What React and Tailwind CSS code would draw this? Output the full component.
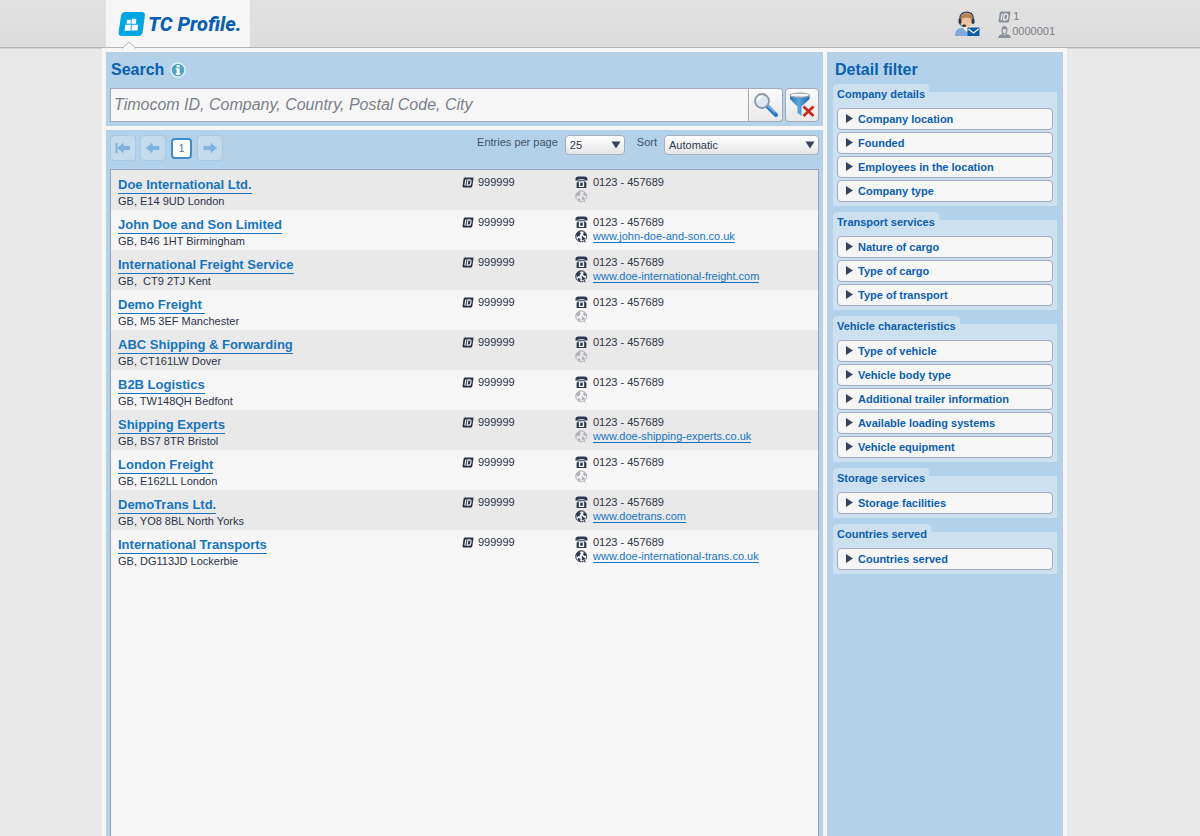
import React from "react";

const SANS = "font-['Liberation_Sans',Arial,sans-serif]";

const companies = [
  { name: "Doe International Ltd.", address: "GB, E14 9UD London" },
  { name: "John Doe and Son Limited", address: "GB, B46 1HT Birmingham", web: "www.john-doe-and-son.co.uk", active: true },
  { name: "International Freight Service", address: "GB,\u00a0 CT9 2TJ Kent", web: "www.doe-international-freight.com", active: true },
  { name: "Demo Freight\u00a0", address: "GB, M5 3EF Manchester" },
  { name: "ABC Shipping & Forwarding", address: "GB, CT161LW Dover" },
  { name: "B2B Logistics", address: "GB, TW148QH Bedfont" },
  { name: "Shipping Experts", address: "GB, BS7 8TR Bristol", web: "www.doe-shipping-experts.co.uk" },
  { name: "London Freight", address: "GB, E162LL London" },
  { name: "DemoTrans Ltd.", address: "GB, YO8 8BL North Yorks", web: "www.doetrans.com", active: true },
  { name: "International Transports", address: "GB, DG113JD Lockerbie", web: "www.doe-international-trans.co.uk", active: true },
];

const filterGroups = [
  { title: "Company details", items: ["Company location", "Founded", "Employees in the location", "Company type"] },
  { title: "Transport services", items: ["Nature of cargo", "Type of cargo", "Type of transport"] },
  { title: "Vehicle characteristics", items: ["Type of vehicle", "Vehicle body type", "Additional trailer information", "Available loading systems", "Vehicle equipment"] },
  { title: "Storage services", items: ["Storage facilities"] },
  { title: "Countries served", items: ["Countries served"] },
];

function LogoMark() {
  return (
    <svg width="28" height="26" viewBox="0 0 28 26" aria-hidden="true" className="shrink-0">
      <path d="M7.500 1H23.500Q27.500 1 26.900 5L24.600 21Q24 25 20 25H4Q0 25 .6 21L3 5Q3.600 1 7.500 1Z" fill="#00a5e3" />
      <path d="M9 8.700h4l-.4 4.100H8.500zM13.900 7.700h4.500l-.5 5.100h-4.500zM7.200 13.700h5.800l-.5 6.100H6.600zM13.900 13.700h6.200l-.6 5.900h-6.100z" fill="#fff" />
    </svg>
  );
}

function InfoIcon() {
  return (
    <svg width="16" height="16" viewBox="0 0 16 16" aria-hidden="true">
      <circle cx="8" cy="8" r="7" fill="#4aa5c3" stroke="#e4f1f5" strokeWidth="1.4" />
      <path d="M6.600 3h3v2.200h-3zM5.800 6.300h3.800v4.900h.9V12.700H5.700v-1.500h1V7.800h-.9z" fill="#fff" />
    </svg>
  );
}

function SupportIcon() {
  return (
    <svg width="26" height="26" viewBox="0 0 26 26" aria-hidden="true">
      <path d="M1 25c0-5 2-8 6.500-8h9c3 0 5 2 5 5v3z" fill="#7fa9dc" />
      <path d="M9 17l3.500 4 4-4v-3H9z" fill="#fbe9df" />
      <ellipse cx="12.500" cy="9.500" rx="5.600" ry="7" fill="#efc19c" />
      <path d="M6.600 8.500C6.500 4 9 2.200 12.500 2.200S18.600 4 18.400 8.500C16 6 9 6 6.600 8.500z" fill="#b8804f" />
      <path d="M5.800 8C6 3.500 8.500 1.200 12.500 1.200S19.200 3.500 19.300 8" fill="none" stroke="#38414f" strokeWidth="1.300" />
      <rect x="4.500" y="7.500" width="3" height="5.500" rx="1.400" fill="#303a49" />
      <rect x="17.500" y="7.500" width="3" height="5.500" rx="1.400" fill="#303a49" />
      <path d="M6 13c.5 1.500 2 2 4 2" fill="none" stroke="#303a49" />
      <rect x="8.500" y="13.500" width="3.500" height="2.500" rx="1" fill="#303a49" />
      <rect x="13.500" y="16.500" width="12" height="8.500" rx=".8" fill="#0a5cab" />
      <path d="M14.500 18l5 4 5-4" fill="none" stroke="#fff" strokeWidth="1.300" />
    </svg>
  );
}

function IdIcon({ large }) {
  return (
    <svg width={large ? 13 : 12} height={large ? 12 : 11} viewBox="0 0 12 11" aria-hidden="true">
      <path d="M2.800.5h7.700q1.200 0 1 1.200l-1.200 7.600q-.2 1.200-1.400 1.200H1.500Q.3 10.500.5 9.300L1.600 1.700Q1.800.5 2.800.5z" fill="currentColor" />
      <path d="M3.900 2.500L2.900 8.500M5.900 2.800h1.600q1.800 0 1.500 1.900l-.2 1.500Q8.600 8.200 6.900 8.200H5.100z" fill="none" stroke="#f0f0f0" strokeWidth="1.200" />
    </svg>
  );
}

function UserIcon() {
  return (
    <svg width="13" height="12" viewBox="0 0 13 12" aria-hidden="true">
      <path d="M3.500 4q0-4 3-4t3 4-3 4.500-3-4.500z" fill="#8b919c" />
      <path d="M4.600 3.500q2-1.200 3.800 0 0 4-1.900 4T4.600 3.500z" fill="#d9dbde" />
      <path d="M.3 12q0-3.300 4-4l2.200 1.300L8.700 8q4 .7 4 4z" fill="#8b919c" />
    </svg>
  );
}

function PhoneIcon() {
  return (
    <svg width="13" height="12" viewBox="0 0 13 12" aria-hidden="true" className="text-[#2d3a50]">
      <path d="M.5 4.600V3Q.6.700 3.500.500h6Q12.400.700 12.500 3v1.600H9.400V3.200H3.600v1.400z" fill="currentColor" />
      <path d="M3.600 4.200h5.800v1l2 1.600V12H1.600V6.800l2-1.600z" fill="currentColor" />
      <path d="M4.500 10.400V6h4v4.400z" fill="none" stroke="#f1f1f1" strokeWidth="1.300" />
    </svg>
  );
}

function GlobeIcon({ active }) {
  return (
    <svg width="13" height="13" viewBox="0 0 13 13" aria-hidden="true" className={active ? "text-[#2d3a50]" : "text-[#b0b3b8]"}>
      <circle cx="6.200" cy="6.300" r="5.500" fill="none" stroke="currentColor" strokeWidth="1" />
      <path d="M1 4.500Q2.500 1.200 6 1L4.800 2.800l1.400.7-1.700 1.400.5 1.600-1.700-.4L2 7.500zM7.800 1.200q3 .8 3.800 4L9.400 6 8 4.500l.8-1.400zM3.200 8l2.300.7-.5 2.800q-1.500-.6-2.400-2z" fill="currentColor" />
      <path d="M6.600 5.200v6.200l1.500-1.500 1.400 2.800 1.600-.8-1.400-2.600h2.200z" fill="currentColor" stroke="#f1f1f1" strokeWidth=".6" />
    </svg>
  );
}

function MagnifierIcon() {
  return (
    <svg width="26" height="26" viewBox="0 0 26 26" aria-hidden="true">
      <path d="M14.500 14.500L23 23" stroke="#2678c0" strokeWidth="4" strokeLinecap="round" />
      <path d="M14.500 13.500L22 20.500" stroke="#8abbe2" strokeWidth="1.400" />
      <circle cx="9" cy="9" r="7" fill="#dce6f6" stroke="#8f96a5" strokeWidth="1.800" />
      <path d="M4.500 9Q5 5 9 4.500" fill="none" stroke="#fff" strokeWidth="1.800" />
    </svg>
  );
}

function ClearFilterIcon() {
  return (
    <svg width="26" height="26" viewBox="0 0 26 26" aria-hidden="true">
      <defs>
        <linearGradient id="funnel" x1="0" x2="1">
          <stop offset="0" stopColor="#2873b8" />
          <stop offset=".45" stopColor="#5ba7dd" />
          <stop offset="1" stopColor="#1c69b2" />
        </linearGradient>
      </defs>
      <path d="M1 3v4l7.500 7.500V21l4 3v-9.500L20.600 7V3z" fill="url(#funnel)" />
      <ellipse cx="10.800" cy="3.200" rx="9.600" ry="2" fill="#f4f6f8" stroke="#9aa3b0" strokeWidth="1.200" />
      <path d="M14.500 14.500l10 9.500M24.500 14.500l-10 9.500" stroke="#c9281c" strokeWidth="2.800" />
    </svg>
  );
}

function ArrowIcon({ direction, bar }) {
  return (
    <svg width="16" height="12" viewBox="0 0 16 12" aria-hidden="true" className={direction === "right" ? "rotate-180" : ""}>
      {bar && <path d="M1.500 1v10" stroke="#7fb2dc" strokeWidth="2" />}
      <path d={bar ? "M3 6L8 1.500v2.900h6.500v3.200H8v2.900z" : "M1.500 6L7 1.500v2.900h7v3.200H7v2.900z"} fill="#7fb2dc" stroke="#7fb2dc" strokeLinejoin="round" />
    </svg>
  );
}

function PagerButton({ label, direction, bar }) {
  return (
    <button type="button" aria-label={label} className="flex size-[26px] items-center justify-center rounded border border-[#a9c9e2] bg-[#c3dbec]">
      <ArrowIcon direction={direction} bar={bar} />
    </button>
  );
}

function Select({ id, value, className }) {
  return (
    <div className={"relative " + className}>
      <select id={id} defaultValue={value} className="h-5 w-full appearance-none rounded border border-[#a9adc0] bg-linear-to-b from-white to-[#e6e6e6] pl-1 text-[11px] leading-4 text-[#2d3a50]">
        <option>{value}</option>
      </select>
      <svg width="10" height="8" viewBox="0 0 10 8" aria-hidden="true" className="pointer-events-none absolute top-1.5 right-1">
        <path d="M.5.500h9L5 7.500z" fill="#36435a" />
      </svg>
    </div>
  );
}

function Header() {
  return (
    <header className="h-12 border-b border-[#b4b4b4] bg-linear-to-b from-[#e2e2e2] to-[#dcdcdc] pr-[31px] shadow-[0_1px_0_#d4d4d4]">
      <div className="mx-auto flex h-full max-w-[965px] justify-between px-1">
        <div className="relative flex w-36 items-center bg-[#f6f6f6] pl-3">
          <a href="#home" className="flex items-center gap-0.5 text-[#0a5fb0]">
            <LogoMark />
            <span className="font-['Roboto',sans-serif] text-[20px] leading-7 font-extrabold whitespace-nowrap italic">TC Profile.</span>
          </a>
          <svg width="14" height="8" viewBox="0 0 14 8" aria-hidden="true" className="absolute -bottom-0.5 left-4">
            <path d="M0 7.500L7 1l7 6.500" fill="#f6f6f6" stroke="#b4b4b4" />
          </svg>
        </div>
        <div className="flex items-center gap-[18px] pt-px pr-2">
          <button type="button" aria-label="Contact support">
            <SupportIcon />
          </button>
          <div className="flex flex-col text-[11px] leading-[15px] text-[#7c7f86]">
            <div className="flex items-center gap-0.5 text-[#8b919c]">
              <IdIcon large />
              <span className="text-[#7c7f86]">1</span>
            </div>
            <div className="flex items-center gap-px">
              <UserIcon />
              <span>0000001</span>
            </div>
          </div>
        </div>
      </div>
    </header>
  );
}

function SearchPanel() {
  return (
    <section className="bg-[#b3d1e9] px-1 pt-2 pb-1">
      <div className="flex items-center gap-1.5 px-px">
        <h1 className="text-base leading-5 font-bold text-[#0a5fb0]">Search</h1>
        <InfoIcon />
      </div>
      <form className="mt-2 flex gap-0.5" onSubmit={(event) => event.preventDefault()}>
        <div className="flex min-w-0 grow">
          <input
            aria-label="Search companies"
            placeholder="Timocom ID, Company, Country, Postal Code, City"
            className="h-[34px] min-w-0 grow border border-[#a3a9bb] bg-[#f6f6f6] px-[3px] text-base italic placeholder:text-[#7b7f8a]"
          />
          <button type="submit" aria-label="Search" className="flex h-[34px] w-[34px] items-center justify-center rounded-r border border-l-0 border-[#a3a9bb] bg-linear-to-b from-[#fafafa] to-[#e9e9e9]">
            <MagnifierIcon />
          </button>
        </div>
        <button type="reset" aria-label="Clear filter" className="flex h-[34px] w-[34px] items-center justify-center rounded border border-[#a3a9bb] bg-linear-to-b from-[#fafafa] to-[#e9e9e9]">
          <ClearFilterIcon />
        </button>
      </form>
    </section>
  );
}

function Toolbar() {
  return (
    <div className="flex h-[38px] items-start justify-between pt-1">
      <nav aria-label="Pages" className="flex items-center gap-1">
        <PagerButton label="First page" bar />
        <PagerButton label="Previous page" />
        <button type="button" aria-current="page" className="mx-px flex size-[21px] items-center justify-center rounded border-2 border-[#3c8dcb] bg-white text-[10px] text-[#3a6ea5]">
          1
        </button>
        <PagerButton label="Next page" direction="right" />
      </nav>
      <div className="flex text-[11px] text-[#3f5469]">
        <label htmlFor="entries" className="mr-[7px] leading-[15px]">Entries per page</label>
        <Select id="entries" value="25" className="w-[60px]" />
        <label htmlFor="sort" className="mr-[7px] ml-3 leading-[15px]">Sort</label>
        <Select id="sort" value="Automatic" className="w-[155px]" />
      </div>
    </div>
  );
}

function CompanyRow({ company }) {
  return (
    <tr className="h-10 odd:bg-[#e9e9e9]">
      <td className="pt-[7px] pl-[7px] align-top">
        <a href="#company" className="block w-fit border-b border-[#1774bf] text-[13px] leading-4 font-bold text-[#1774bf]">{company.name}</a>
        <div className="leading-[14px]">{company.address}</div>
      </td>
      <td className="pt-1 align-top">
        <div className="flex items-center gap-1 leading-4">
          <IdIcon />
          <span>999999</span>
        </div>
      </td>
      <td className="pt-1 align-top">
        <div className="flex items-center gap-[5px] leading-4">
          <PhoneIcon />
          <span>0123 - 457689</span>
        </div>
        <div className="flex items-start gap-[5px]">
          <GlobeIcon active={company.active} />
          {company.web && (
            <a href="#website" className="border-b border-[#1774bf] leading-3 text-[#1774bf]">{company.web}</a>
          )}
        </div>
      </td>
    </tr>
  );
}

function ResultsPanel() {
  return (
    <section className="flex grow flex-col bg-[#b3d1e9] px-1 pt-px">
      <Toolbar />
      <div className="grow border border-b-0 border-[#98a5be] bg-[#f6f6f6]">
        <table className="w-full table-fixed border-collapse text-[11px] text-[#2d3348]">
          <colgroup>
            <col />
            <col className="w-[113px]" />
            <col className="w-[243px]" />
          </colgroup>
          <tbody>
            {companies.map((company) => (
              <CompanyRow key={company.name} company={company} />
            ))}
          </tbody>
        </table>
      </div>
    </section>
  );
}

function FilterGroup({ group }) {
  return (
    <section>
      <h3 className="h-2 w-fit rounded-t bg-[#cce0ef] px-1 pt-0.5 text-[11px] leading-4 font-bold text-[#0a5fb0]">{group.title}</h3>
      <ul className="flex flex-col gap-0.5 bg-[#cce0ef] px-1 pt-4 pb-1">
        {group.items.map((item) => (
          <li key={item}>
            <button type="button" className="flex h-[22px] w-full items-center gap-[5px] rounded border border-[#a0abc2] bg-[#f6f6f6] pl-2 text-left text-[11px] font-bold text-[#0a5fb0]">
              <svg width="7" height="10" viewBox="0 0 7 10" aria-hidden="true">
                <path d="M0 0l7 4.500L0 9z" fill="#36435a" />
              </svg>
              {item}
            </button>
          </li>
        ))}
      </ul>
    </section>
  );
}

function DetailFilter() {
  return (
    <aside className="w-[236px] shrink-0 bg-[#b3d1e9] px-1.5 pt-2">
      <h2 className="pl-0.5 text-base leading-5 font-bold text-[#0a5fb0]">Detail filter</h2>
      <div className="mt-1 flex flex-col gap-1.5">
        {filterGroups.map((group) => (
          <FilterGroup key={group.title} group={group} />
        ))}
      </div>
    </aside>
  );
}

export default function App() {
  return (
    <div className={"flex min-h-screen flex-col bg-[#e9e9e9] " + SANS}>
      <Header />
      <main className="flex grow pr-[31px]">
        <div className="mx-auto flex w-full max-w-[965px] gap-1 bg-[#f6f6f6] px-1 pt-1">
          <div className="flex min-w-0 grow flex-col gap-1">
            <SearchPanel />
            <ResultsPanel />
          </div>
          <DetailFilter />
        </div>
      </main>
    </div>
  );
}
